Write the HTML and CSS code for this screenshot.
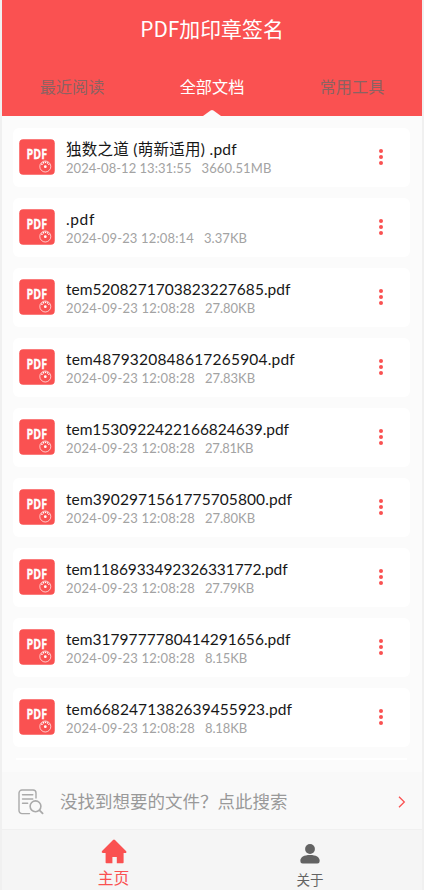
FILE: index.html
```
<!DOCTYPE html>
<html lang="zh-CN">
<head>
<meta charset="utf-8">
<meta name="viewport" content="width=device-width, initial-scale=1">
<title>PDF加印章签名</title>
<link rel="stylesheet" href="styles.css">
</head>
<body>
<div class="app">
  <header class="header">
    <h1 class="title">PDF加印章签名</h1>
    <nav class="tabs">
      <span class="tab">最近阅读</span>
      <span class="tab active">全部文档</span>
      <span class="tab">常用工具</span>
    </nav>
  </header>
  <main class="files" id="files"></main>
  <div class="search">
    <svg class="search-icon" width="26" height="26" viewBox="0 0 26 26" fill="none" stroke="#aaa" stroke-width="1.4" stroke-linecap="round">
      <path d="M11.5 24.6H4a3 3 0 0 1-3-3V4a3 3 0 0 1 3-3h11a3 3 0 0 1 3 3v5M4.5 5.8h10.3M4.5 10h10.3M4.500 14.300h5.200"/>
      <circle cx="17.500" cy="17.300" r="5.400" stroke-width="1.600"/><path d="m21.600 21.300 3 3" stroke-width="1.800"/>
    </svg>
    <span class="search-text">没找到想要的文件？点此搜索</span>
    <svg class="chevron" width="8" height="12" viewBox="0 0 8 12" fill="none" stroke="#fa5151" stroke-width="1.300"><path d="m1 .8 5.300 5.200L1 11.200"/></svg>
  </div>
  <footer class="bottom">
    <div class="nav home">
      <svg width="26" height="25" viewBox="0 0 26 25" fill="#fa5151"><path d="M12 .9q1-.9 2 0l11 11q1 1.200 0 2h-2.400v9.600q0 .8-.8.8h-6v-6.400h-4.400v6.400h-6q-.8 0-.8-.8v-9.600H1.700Q0 13.500 1 11.900z"/></svg>
      <span>主页</span>
    </div>
    <div class="nav about">
      <svg width="20" height="20" viewBox="0 0 20 20" fill="#636363"><circle cx="10" cy="5" r="4.900"/><path d="M.3 17C.3 13 4 11 10 11s9.700 2 9.700 6q0 2.500-2.400 2.500H2.700Q.3 19.500.3 17z"/></svg>
      <span>关于</span>
    </div>
  </footer>
</div>
<template id="row">
  <article class="card">
    <svg class="pdf" width="36" height="36" viewBox="0 0 36 36">
      <rect width="35.500" height="35.500" x=".25" y=".25" rx="4" fill="#fa5151"/>
      <text x="7.500" y="20.300" textLength="20.500" lengthAdjust="spacingAndGlyphs" class="pdf-label">PDF</text>
      <circle cx="26.300" cy="27.500" r="6.500" fill="#fa5151"/>
      <g fill="none" stroke="#fff"><circle cx="26.300" cy="27.500" r="5.500" stroke-width=".7"/><path d="M22.600 25.800a4 4 0 0 1 7.400 0" stroke-width="1.500" stroke-dasharray="1.300 .8"/></g>
      <circle cx="26.300" cy="27.700" r="1.400" fill="#fff"/>
    </svg>
    <div class="info">
      <div class="name"></div>
      <div class="meta"><span class="date"></span><span class="size"></span></div>
    </div>
    <svg class="more" width="4" height="16" viewBox="0 0 4 16" fill="#fa5151"><circle cx="2" cy="2" r="2"/><circle cx="2" cy="8" r="2"/><circle cx="2" cy="14" r="2"/></svg>
  </article>
</template>
<script src="files.js"></script>
</body>
</html>
```
FILE: files.js
```
// name, name width, date, date width, size, size width
const files = [
  ['独数之道 (萌新适用) .pdf', 171, '2024-08-12 13:31:55', 125.5, '3660.51MB', 70],
  ['.pdf', 29, '2024-09-23 12:08:14', 128, '3.37KB', 43],
  ['tem5208271703823227685.pdf', 224.5, '2024-09-23 12:08:28', 129, '27.80KB', 50],
  ['tem4879320848617265904.pdf', 229, '2024-09-23 12:08:28', 129, '27.83KB', 50],
  ['tem1530922422166824639.pdf', 223, '2024-09-23 12:08:28', 129, '27.81KB', 48],
  ['tem3902971561775705800.pdf', 226, '2024-09-23 12:08:28', 129, '27.80KB', 50],
  ['tem1186933492326331772.pdf', 221.5, '2024-09-23 12:08:28', 129, '27.79KB', 49],
  ['tem3179777780414291656.pdf', 224.5, '2024-09-23 12:08:28', 129, '8.15KB', 42],
  ['tem6682471382639455923.pdf', 226, '2024-09-23 12:08:28', 129, '8.18KB', 42],
];
const list = document.getElementById('files');
const row = document.getElementById('row');

// Spread the letters of a label over a given width.
function fit(el, text, width) {
  el.textContent = text;
  const extra = (width - el.getBoundingClientRect().width) / text.length;
  el.style.letterSpacing = extra + 'px';
}

for (const [name, nw, date, dw, size, sw] of files) {
  list.append(row.content.cloneNode(true));
  const card = list.lastElementChild;
  fit(card.querySelector('.name'), name, nw);
  fit(card.querySelector('.date'), date, dw);
  fit(card.querySelector('.size'), size, sw);
}
const next = document.createElement('div');
next.className = 'card-edge';
list.append(next);
```
FILE: styles.css
```
* { box-sizing: border-box; }
body {
  margin: 0;
  background: #f0f0f0;
  font-family: "Noto Sans CJK SC", sans-serif;
}
.app {
  width: 420px;
  height: 890px;
  margin-left: 2px;
  display: flex;
  flex-direction: column;
  background: #fbfbfb;
  overflow: hidden;
}
.header { height: 116px; background: #fa5151; color: #fff; flex: none; }
.title {
  margin: 0;
  height: 59px;
  line-height: 57px;
  font-size: 20.900px;
  font-weight: 400;
  text-align: center;
}
.tabs { display: grid; grid-template-columns: repeat(3, 1fr); height: 57px; }
.tab {
  position: relative;
  text-align: center;
  font-size: 16.200px;
  line-height: 55px;
  color: #8b6262;
}
.tab.active { color: #fff; }
.tab.active::after {
  content: "";
  position: absolute;
  left: 50%;
  bottom: 0;
  width: 18px;
  height: 6px;
  margin-left: -9px;
  background: #fbfbfb;
  clip-path: polygon(0 100%, 42% 8%, 50% 0, 58% 8%, 100% 100%);
}
.files {
  height: 656px;
  flex: none;
  padding: 12px 12px 0 11px;
  display: flex;
  flex-direction: column;
  gap: 11px;
}
.card {
  height: 59px;
  flex: none;
  display: flex;
  align-items: center;
  background: #fff;
  border-radius: 6px;
  padding: 0 27px 1px 6px;
}
.card-edge { height: 2px; margin: 0 3px; background: #fff; }
.pdf { flex: none; }
.pdf-label { font: 700 14px "Open Sans", sans-serif; fill: #fff; stroke: #fff; stroke-width: .3px; }
.info { flex: 1; margin-left: 11px; padding-top: 2px; }
.name {
  width: max-content;
  white-space: pre;
  font-family: Lato, "Noto Sans CJK SC", sans-serif;
  font-size: 15.500px;
  line-height: 20px;
  height: 20px;
  color: #171717;
}
.meta {
  display: flex;
  gap: 10px;
  white-space: pre;
  font-family: Lato, sans-serif;
  font-size: 13px;
  line-height: 18px;
  color: #a3a3a3;
}
.search {
  height: 57px;
  flex: none;
  display: flex;
  align-items: center;
  padding: 2px 16px 0 16px;
  background: #f9f9f9;
}
.search-text {
  flex: 1;
  margin: -2px 0 0 16px;
  font-size: 17.500px;
  color: #999;
}
.bottom {
  height: 61px;
  flex: none;
  display: flex;
  border-top: 1px solid #f0f0f0;
  background: #f5f5f5;
}
.nav {
  display: flex;
  flex-direction: column;
  align-items: center;
  line-height: 20px;
}
.nav svg { flex: none; }
.home { width: 223px; padding-top: 9px; gap: 4px; font-size: 15.800px; color: #fa5151; }
.about { width: 170px; padding-top: 14px; gap: 5px; font-size: 13.500px; color: #636363; }
```
